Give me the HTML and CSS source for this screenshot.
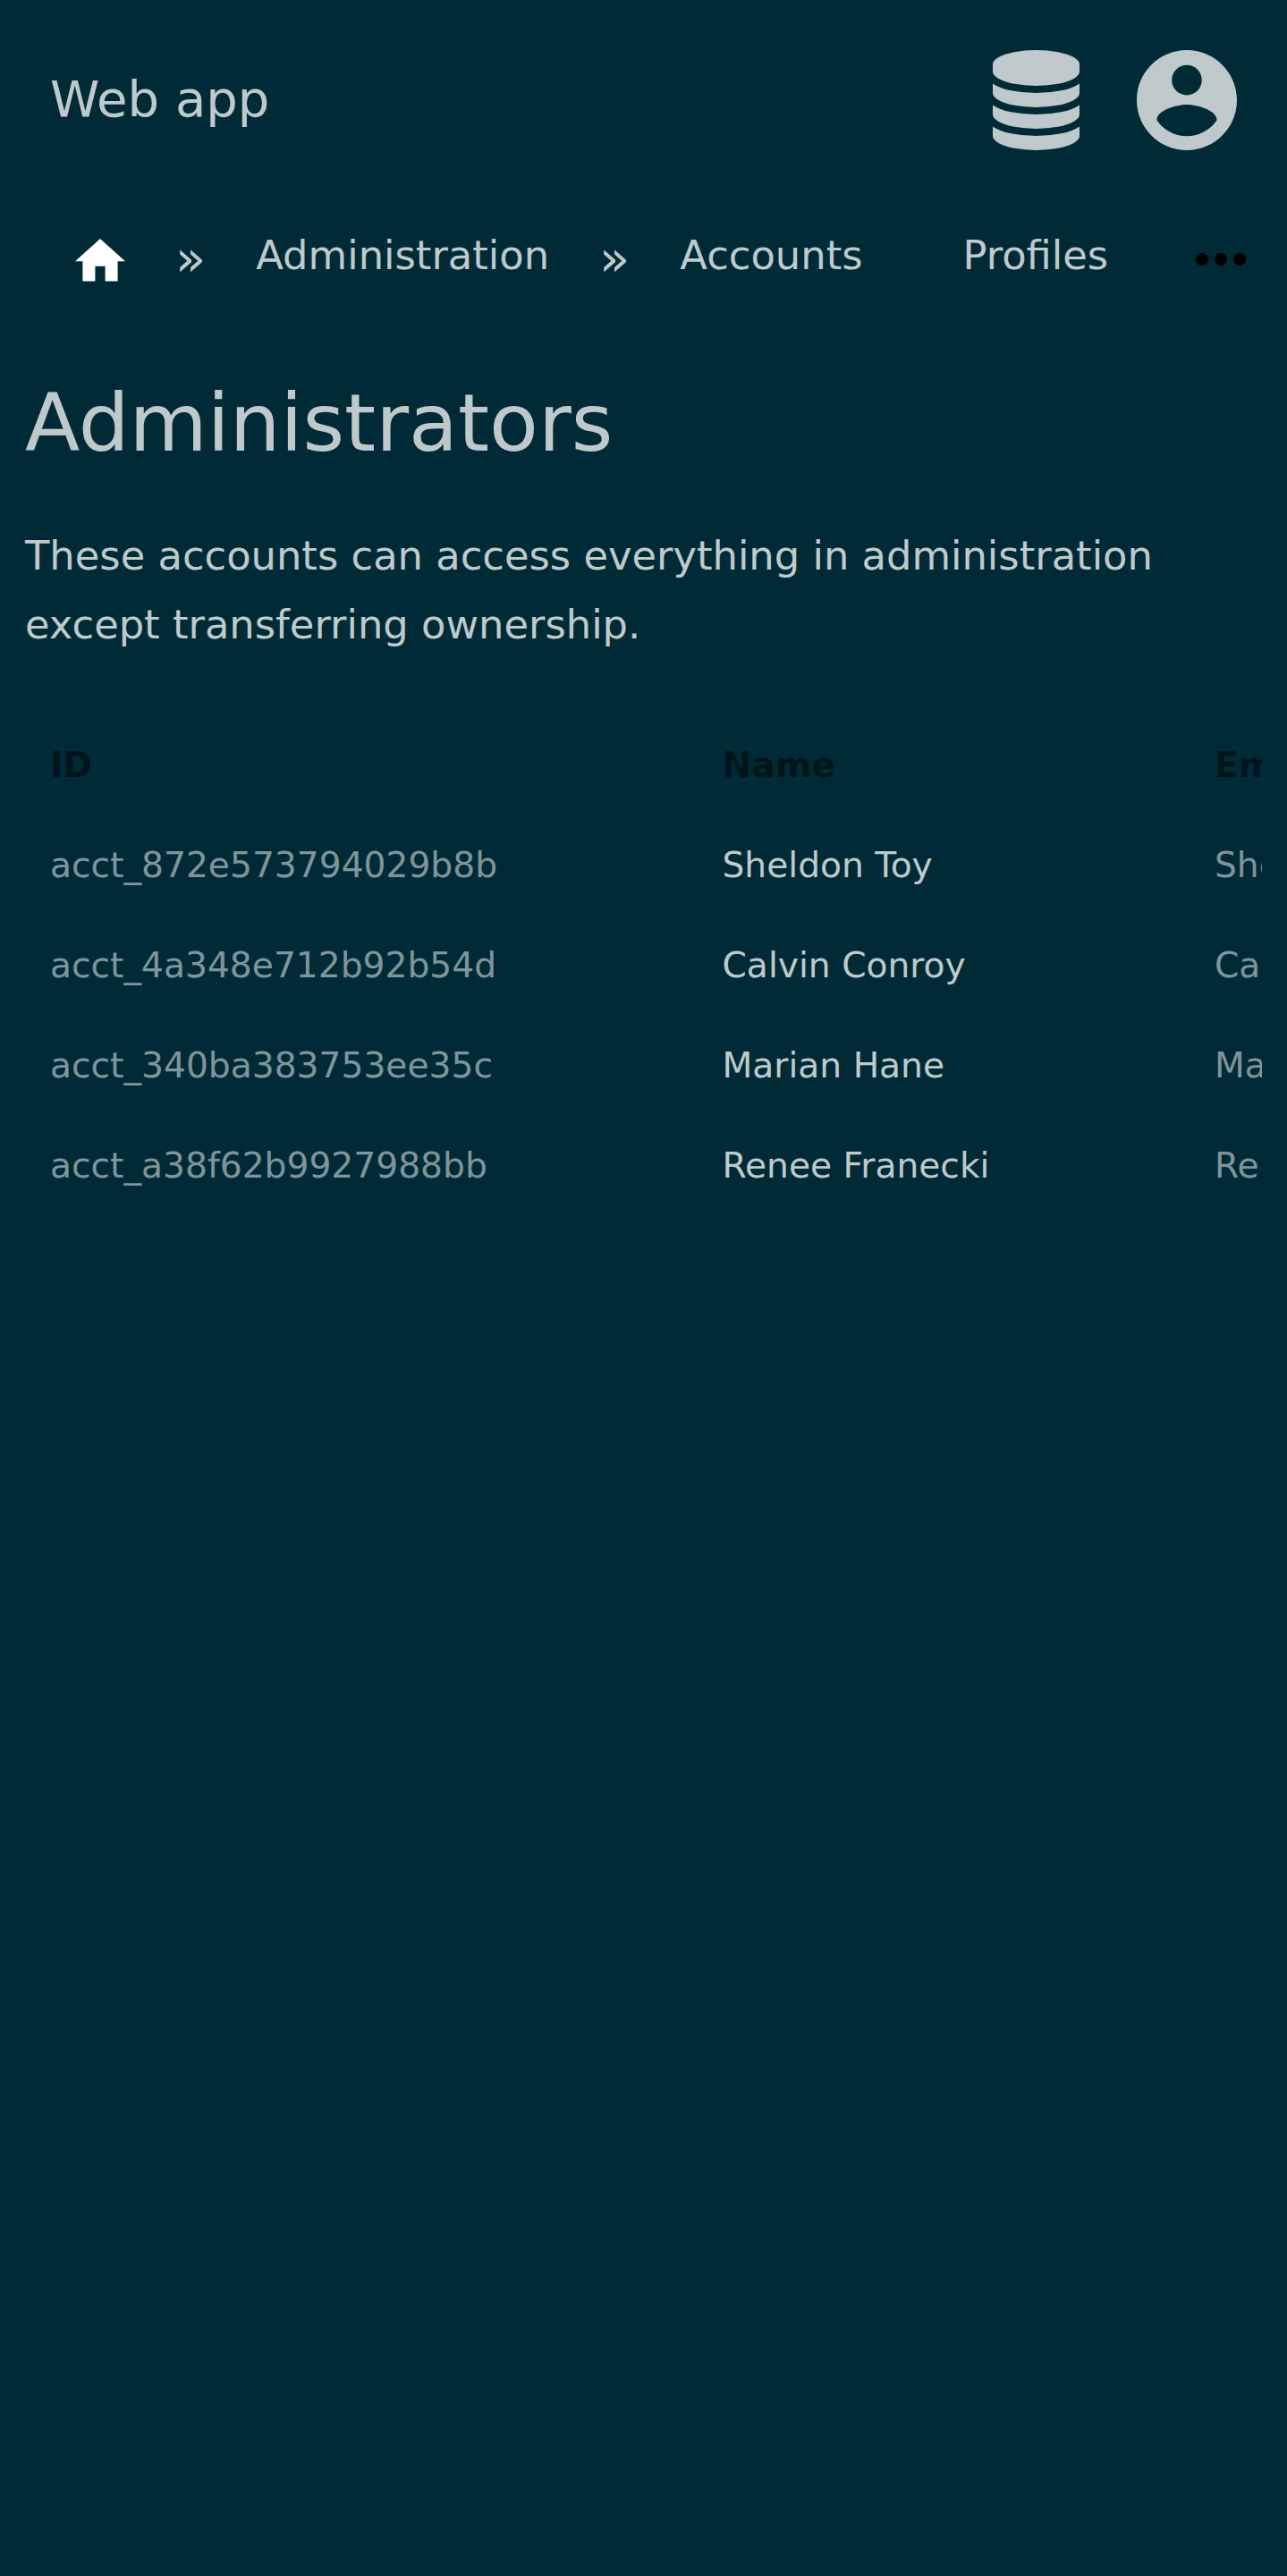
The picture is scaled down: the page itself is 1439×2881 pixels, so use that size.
FILE: index.html
```html
<!DOCTYPE html>
<html lang="en">
<head>
<meta charset="utf-8">
<title>Administrators</title>
<link rel="stylesheet" href="styles.css">
</head>
<body>
<header class="header">
  <a class="brand">Web app</a>
  <div class="header-actions">
    <svg class="header-icon" viewBox="-128 0 1792 1792"><path transform="translate(-16 0) scale(1.0104 1)" d="M768 768q237 0 443-43t325-127v170q0 69-103 128t-280 93.500-385 34.500-385-34.500-280-93.500-103-128v-170q119 84 325 127t443 43zm0 768q237 0 443-43t325-127v170q0 69-103 128t-280 93.500-385 34.500-385-34.500-280-93.500-103-128v-170q119 84 325 127t443 43zm0-384q237 0 443-43t325-127v170q0 69-103 128t-280 93.500-385 34.500-385-34.500-280-93.500-103-128v-170q119 84 325 127t443 43zm0-1152q208 0 385 34.500t280 93.500 103 128v128q0 69-103 128t-280 93.500-385 34.500-385-34.500-280-93.500-103-128v-128q0-69 103-128t280-93.500 385-34.500z"/></svg>
    <svg class="header-icon" viewBox="2 2 20 20"><path d="M12 2C6.48 2 2 6.48 2 12s4.480 10 10 10 10-4.480 10-10S17.520 2 12 2zm0 3c1.660 0 3 1.340 3 3s-1.340 3-3 3-3-1.340-3-3 1.340-3 3-3zm0 14.200c-2.500 0-4.710-1.280-6-3.220.030-1.990 4-3.080 6-3.080 1.990 0 5.970 1.090 6 3.080-1.290 1.940-3.500 3.220-6 3.220z"/></svg>
  </div>
</header>
<nav class="nav">
  <svg class="home-icon" viewBox="2 3 20 17"><path d="M10 20v-6h4v6h5v-8h3L12 3 2 12h3v8z"/></svg>
  <span class="divider">»</span>
  <a class="nav-link">Administration</a>
  <span class="divider">»</span>
  <a class="nav-link">Accounts</a>
  <a class="nav-link nav-link-next">Profiles</a>
  <svg class="more-icon" viewBox="0 0 56 14"><circle cx="7" cy="7" r="7"/><circle cx="28" cy="7" r="7"/><circle cx="49" cy="7" r="7"/></svg>
</nav>
<main class="content">
  <h1 class="title">Administrators</h1>
  <p class="intro">These accounts can access everything in administration except transferring ownership.</p>
  <div class="table-wrap">
    <table class="table">
      <thead><tr><th class="col-id">ID</th><th class="col-name">Name</th><th class="col-email">Email</th></tr></thead>
      <tbody>
        <tr><td>acct_872e573794029b8b</td><td class="name">Sheldon Toy</td><td>Sheldon</td></tr>
        <tr><td>acct_4a348e712b92b54d</td><td class="name">Calvin Conroy</td><td>Ca</td></tr>
        <tr><td>acct_340ba383753ee35c</td><td class="name">Marian Hane</td><td>Marian</td></tr>
        <tr><td>acct_a38f62b9927988bb</td><td class="name">Renee Franecki</td><td>Re</td></tr>
      </tbody>
    </table>
  </div>
</main>
</body>
</html>
```
FILE: styles.css
```css
* { box-sizing: border-box; }

html { background: #002b36; }

body {
  margin: 0;
  min-height: 2881px;
  overflow: hidden;
  color: rgba(255, 255, 255, 0.75);
  font-family: "DejaVu Sans", sans-serif;
  font-size: 44.8px;
}

.header {
  display: flex;
  align-items: center;
  justify-content: space-between;
  height: 224px;
  padding: 0 56px;
}

.brand {
  font-size: 56px;
  line-height: 109px;
  padding-bottom: 3px;
}

.header-actions { display: flex; gap: 56px; }

.header-icon {
  display: block;
  width: 112px;
  height: 112px;
  fill: rgba(255, 255, 255, 0.75);
}

.nav {
  display: flex;
  align-items: flex-start;
  height: 133px;
  padding: 28px 46px 0 84px;
  white-space: nowrap;
}

.home-icon {
  width: 56px;
  height: 47.6px;
  margin-top: 15px;
  fill: #fff;
}

.divider {
  margin: 0 56px;
  font-size: 56px;
  line-height: 73px;
}

.nav-link { line-height: 67px; }

.nav-link-next { margin-left: 112px; }

.more-icon {
  width: 56px;
  height: 14px;
  margin: 31px 0 0 auto;
  fill: #000;
}

.content { padding: 56px 28px; }

.title {
  margin: 0;
  font-size: 89.6px;
  font-weight: 400;
  line-height: 120px;
}

.intro {
  margin: 50px 0 0;
  line-height: 77px;
}

.table-wrap {
  margin-top: 62px;
  overflow: hidden;
}

.table {
  width: 2000px;
  table-layout: fixed;
  border-collapse: collapse;
  font-size: 39.2px;
}

.table th,
.table td {
  height: 112px;
  padding: 0 28px;
  text-align: left;
  white-space: nowrap;
}

.table th { color: rgba(0, 0, 0, 0.5); }
.table td { color: rgba(255, 255, 255, 0.5); }
.table .name { color: rgba(255, 255, 255, 0.75); }

.col-id { width: 751.5px; }
.col-name { width: 550.5px; }
```
